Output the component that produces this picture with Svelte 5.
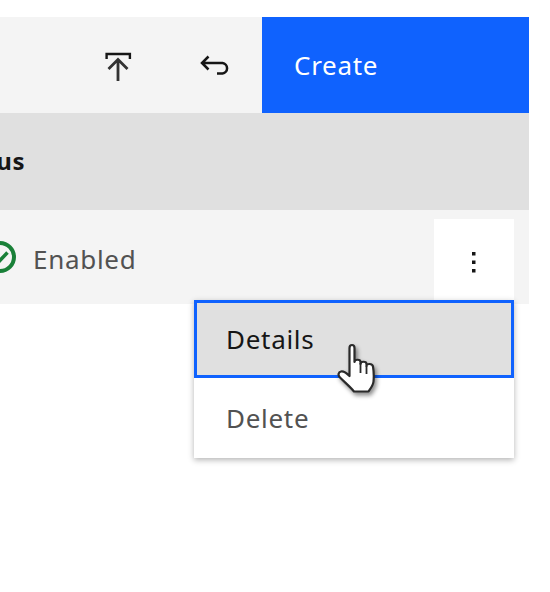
<script>
  let status = 'Enabled';
</script>

<div class="table">
  <div class="toolbar">
    <button type="button" class="tool" aria-label="Upload">
      <svg viewBox="0 0 32 32" width="32" height="32" fill="none" stroke="#161616" stroke-width="2.800">
        <path d="M4.600 10V5h23.300v5" stroke-width="2.400" />
        <path d="M16 32V10.500M6.500 20 16 10.500l9.500 9.500" stroke="#333" />
      </svg>
    </button>
    <button type="button" class="tool undo" aria-label="Undo">
      <svg viewBox="0 0 32 32" width="32" height="32" fill="none" stroke="#161616" stroke-width="2.500">
        <path d="M9.500 7.500 3 14l6.500 6.500M3 14h20.500a5.300 5.300 0 0 1 0 10.500H18" />
      </svg>
    </button>
    <button type="button" class="create">Create</button>
  </div>

  <div class="head"><span class="title">Status</span></div>

  <div class="row">
    <svg class="check" viewBox="0 0 32 32" width="32" height="32" fill="none">
      <circle cx="16" cy="16" r="14" stroke="#198038" stroke-width="4" />
      <path d="M11 17.500l3.500 3.500 9-9.500" stroke="#198038" stroke-width="3.500" />
    </svg>
    <span class="status">{status}</span>
    <div class="overflow">
      <svg viewBox="0 0 8 32" width="8" height="32" fill="#161616">
        <rect x="2" y="6" width="3.500" height="3.500" />
        <rect x="2" y="14.500" width="3.500" height="3.500" />
        <rect x="2" y="23" width="3.500" height="3.500" />
      </svg>
    </div>
  </div>

  <ul class="menu">
    <li class="item active">Details</li>
    <li class="item">Delete</li>
  </ul>

  <svg class="cursor" viewBox="0 0 45 56" width="45" height="56" aria-hidden="true">
    <path
      d="M13.500 6c0-4 5-4 5 0V20c0-3 6-3 6 0v2c0-3 6-3 6 0v2c0-3 6-2.500 6.500 .5 .8 5 1 10 .5 15-.4 4-3 7-5 10H18c-3-4-9-9-14-14-2.500-2.500-1.500-5.500 1-6 2.500-.5 5.500 1.500 8.500 4.500z"
      fill="#fff"
      stroke="#2a2a2a"
      stroke-width="2.200"
      stroke-linejoin="round"
    />
    <path d="M24.500 21v10M30.500 24v8" stroke="#2a2a2a" stroke-width="1.800" fill="none" />
  </svg>
</div>

<style>
  :global(body) {
    margin: 0;
    background: #fff;
  }
  .table {
    position: relative;
    width: 529px;
    padding-top: 17px;
    height: 575px;
    font-family: "Noto Sans", "Open Sans", sans-serif;
    font-size: 26px;
    letter-spacing: 0.7px;
  }
  .toolbar {
    display: flex;
    justify-content: flex-end;
    height: 96px;
    background: #f4f4f4;
  }
  .tool {
    display: flex;
    align-items: center;
    justify-content: center;
    width: 48px;
    height: 96px;
    padding: 0;
    margin-right: 49px;
    border: none;
    background: none;
  }
  .tool.undo {
    margin-right: 23px;
  }
  .create {
    width: 267px;
    height: 96px;
    padding: 0 0 0 32px;
    border: none;
    background: #0f62fe;
    color: #fff;
    font: inherit;
    letter-spacing: inherit;
    text-align: left;
  }
  .head {
    display: flex;
    align-items: center;
    height: 97px;
    overflow: hidden;
    background: #e0e0e0;
  }
  .title {
    margin-left: -55px;
    margin-top: -2px;
    font-weight: 700;
    font-size: 24px;
    color: #161616;
  }
  .row {
    display: flex;
    align-items: center;
    height: 94px;
    overflow: hidden;
    background: #f4f4f4;
    color: #525252;
  }
  .check {
    flex: none;
    margin-left: -16px;
    margin-top: -1px;
  }
  .status {
    margin-left: 17px;
    margin-top: 3px;
  }
  .overflow {
    display: flex;
    align-items: center;
    justify-content: center;
    width: 80px;
    height: 85px;
    margin-left: auto;
    margin-right: 15px;
    margin-top: 9px;
    background: #fff;
  }
  .menu {
    position: absolute;
    top: 300px;
    left: 194px;
    width: 320px;
    margin: 0;
    padding: 0;
    list-style: none;
    background: #fff;
    box-shadow: 0 2px 6px rgba(0, 0, 0, 0.3);
    color: #525252;
  }
  .item {
    display: flex;
    align-items: center;
    box-sizing: border-box;
    height: 80px;
    padding-left: 32px;
  }
  .item.active {
    height: 78px;
    padding-left: 29px;
    border: 3px solid #0f62fe;
    background: #e0e0e0;
    color: #161616;
  }
  .cursor {
    position: absolute;
    top: 342px;
    left: 336px;
    filter: drop-shadow(2px 3px 2px rgba(0, 0, 0, 0.45));
  }
</style>
